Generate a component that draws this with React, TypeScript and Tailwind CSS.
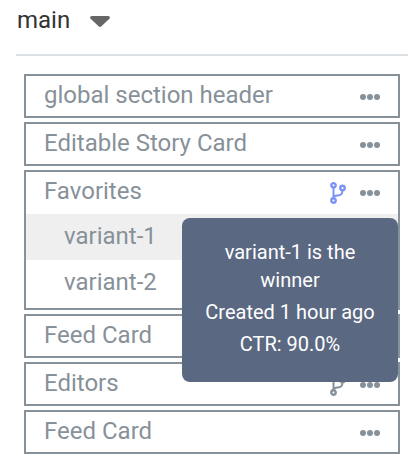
type Variant = { name: string; winner?: boolean };

type Card = {
  id: number;
  title: string;
  branch?: "active" | "idle";
  variants?: Variant[];
};

const cards: Card[] = [
  { id: 1, title: "global section header" },
  { id: 2, title: "Editable Story Card" },
  {
    id: 3,
    title: "Favorites",
    branch: "active",
    variants: [{ name: "variant-1", winner: true }, { name: "variant-2" }],
  },
  { id: 4, title: "Feed Card" },
  { id: 5, title: "Editors", branch: "idle" },
  { id: 6, title: "Feed Card" },
];

function BranchIcon() {
  return (
    <svg
      width="18"
      height="24"
      viewBox="0 0 18 24"
      fill="none"
      stroke="currentColor"
      strokeWidth="2.4"
    >
      <circle cx="3.5" cy="4.3" r="2.2" />
      <circle cx="12.5" cy="7" r="2.2" />
      <circle cx="3.5" cy="19.5" r="2.2" />
      <path strokeWidth="2" d="M3.5 6.5v11M12.500 9c0 4.500-2 5.300-4.800 5.600-2.200.2-3.800.3-4.200 2" />
    </svg>
  );
}

function DotsIcon() {
  return (
    <svg width="20" height="6" viewBox="0 0 20 6" fill="currentColor">
      <circle cx="3" cy="3" r="3" />
      <circle cx="10" cy="3" r="3" />
      <circle cx="17" cy="3" r="3" />
    </svg>
  );
}

function WinnerTooltip({ name }: { name: string }) {
  return (
    <div
      role="tooltip"
      className="absolute right-0 top-1 z-10 flex w-[216px] flex-col gap-1 rounded-lg bg-[#5b6882] px-5 pb-6 pt-5 text-center text-[20px] leading-7 text-white"
    >
      <p>{`${name} is the winner`}</p>
      <p>Created 1 hour ago</p>
      <p>CTR: 90.0%</p>
    </div>
  );
}

function CardItem({ card }: { card: Card }) {
  return (
    <li className="border-2 border-[#879199]">
      <div className="flex h-10 items-center px-[18px] pb-0.5">
        <span className="flex-1">{card.title}</span>
        <div className="flex items-center gap-3 pt-1">
          {card.branch && (
            <button
              type="button"
              aria-label="Show variants"
              className={card.branch === "active" ? "text-[#7b93f5]" : ""}
            >
              <BranchIcon />
            </button>
          )}
          <button type="button" aria-label="More options">
            <DotsIcon />
          </button>
        </div>
      </div>
      {card.variants && (
        <ul className="py-0.5">
          {card.variants.map((variant) => (
            <li
              key={variant.name}
              className={
                variant.winner
                  ? "relative flex h-[46px] items-center bg-[#efefef] pb-0.5 pl-[38px]"
                  : "flex h-[46px] items-center pb-0.5 pl-[38px]"
              }
            >
              <span>{variant.name}</span>
              {variant.winner && <WinnerTooltip name={variant.name} />}
            </li>
          ))}
        </ul>
      )}
    </li>
  );
}

export default function App() {
  return (
    <div className="bg-white font-['Roboto',sans-serif] text-[24px] leading-7 text-[#879199]">
      <header className="ml-4 mr-[10px] flex h-14 items-start border-b-2 border-[#dbe0e4] pl-px pt-[6px]">
        <button type="button" className="flex items-center gap-5 text-[#333333]">
          main
          <svg className="mt-1" width="20" height="12" viewBox="0 0 20 12" fill="#666666">
            <path d="M2 0h16c1.800 0 2.600 1.600 1.400 2.700l-8 7.600c-.8.8-2 .8-2.800 0l-8-7.600C-.6 1.600.2 0 2 0z" />
          </svg>
        </button>
      </header>
      <ul className="flex flex-col gap-1 pb-3 pl-6 pr-[18px] pt-[18px]">
        {cards.map((card) => (
          <CardItem key={card.id} card={card} />
        ))}
      </ul>
    </div>
  );
}
